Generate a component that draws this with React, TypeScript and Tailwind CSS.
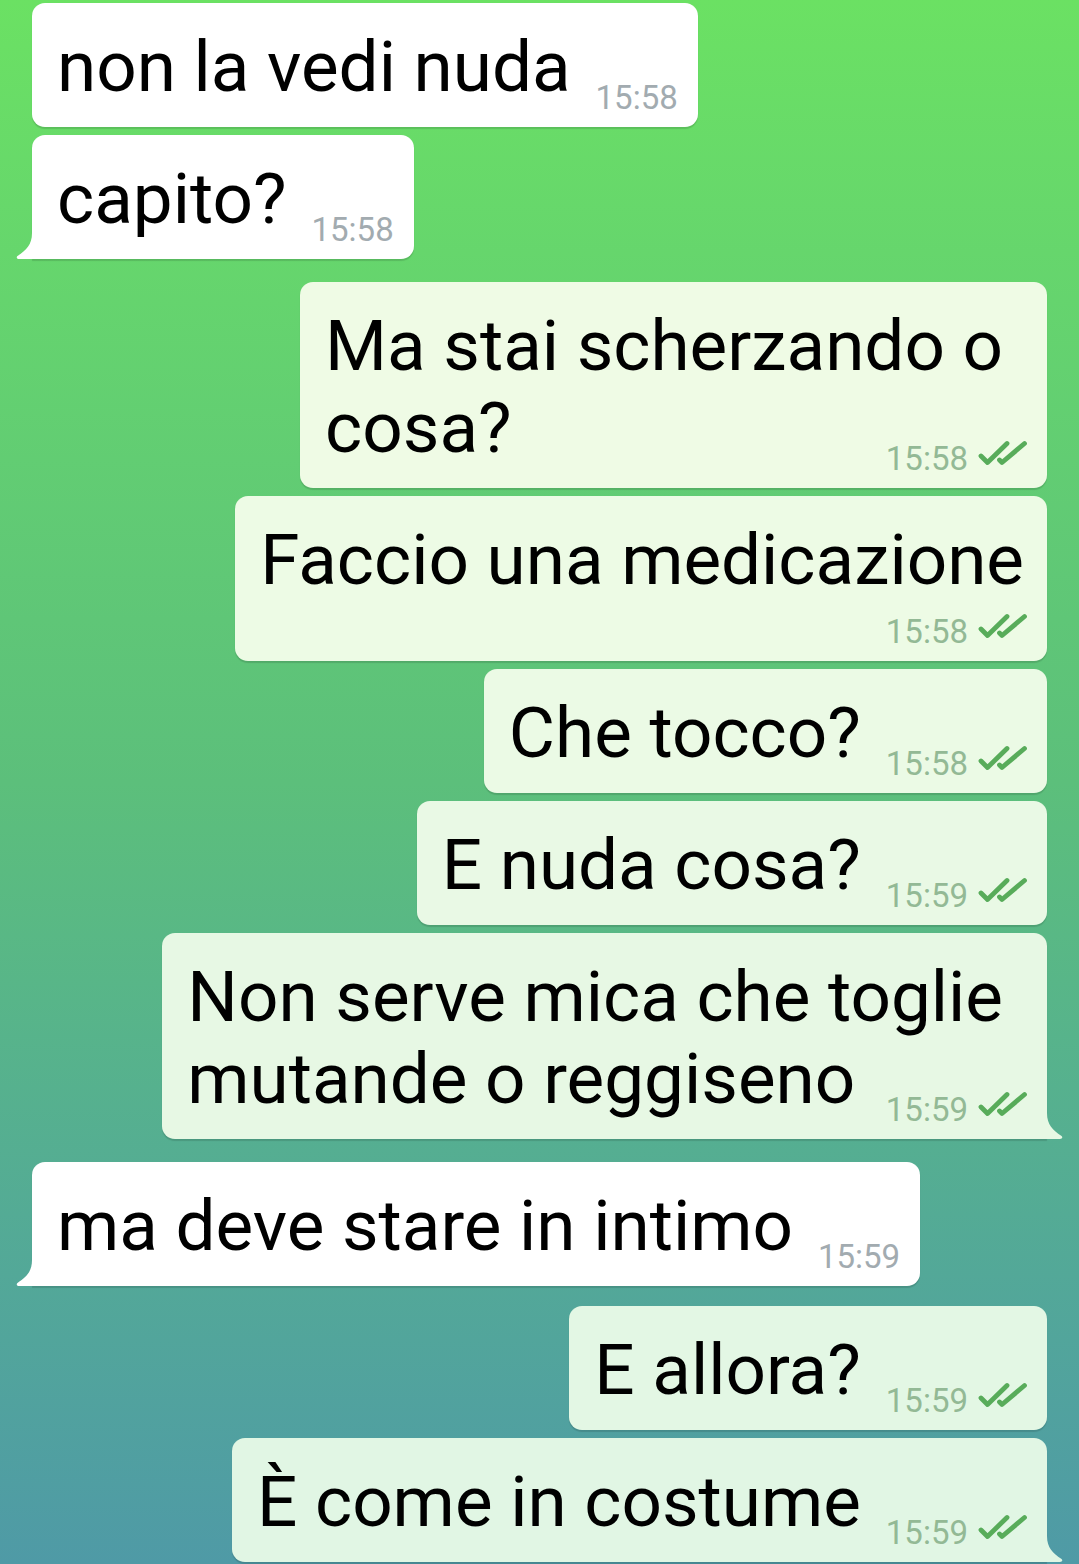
import React from "react";

type Msg = {
  side: "in" | "out";
  lines: string[];
  time: string;
  mode: "inline" | "below" | "wrap";
  tail?: boolean;
  bg?: string;
  mt: string;
};

const msgs: Msg[] = [
  { side: "in", lines: ["non la vedi nuda"], time: "15:58", mode: "inline", mt: "mt-[3px]" },
  { side: "in", lines: ["capito?"], time: "15:58", mode: "inline", tail: true, mt: "mt-[8px]" },
  { side: "out", lines: ["Ma stai scherzando o", "cosa?"], time: "15:58", mode: "wrap", bg: "bg-[#effbe5]", mt: "mt-[23px]" },
  { side: "out", lines: ["Faccio una medicazione"], time: "15:58", mode: "below", bg: "bg-[#edfbe5]", mt: "mt-[8px]" },
  { side: "out", lines: ["Che tocco?"], time: "15:58", mode: "inline", bg: "bg-[#ebfae5]", mt: "mt-[8px]" },
  { side: "out", lines: ["E nuda cosa?"], time: "15:59", mode: "inline", bg: "bg-[#e9f9e5]", mt: "mt-[8px]" },
  { side: "out", lines: ["Non serve mica che toglie", "mutande o reggiseno"], time: "15:59", mode: "wrap", tail: true, bg: "bg-[#e7f8e4]", mt: "mt-[8px]" },
  { side: "in", lines: ["ma deve stare in intimo"], time: "15:59", mode: "inline", tail: true, mt: "mt-[23px]" },
  { side: "out", lines: ["E allora?"], time: "15:59", mode: "inline", bg: "bg-[#e3f7e4]", mt: "mt-[20px]" },
  { side: "out", lines: ["È come in costume"], time: "15:59", mode: "inline", tail: true, bg: "bg-[#e1f6e4]", mt: "mt-[8px]" },
];

function Checks() {
  return (
    <svg width="50" height="26" viewBox="0 0 50 26" className="ml-[10px] mb-[9px] shrink-0" fill="none">
      <path d="M3 16 L9.5 22.5 L29 3.5" stroke="#58ac5a" strokeWidth="4.8" strokeLinecap="round" strokeLinejoin="round" />
      <path d="M21.5 20 L24 22.5 L46.5 3.5" stroke="#58ac5a" strokeWidth="4.8" strokeLinecap="round" strokeLinejoin="round" />
    </svg>
  );
}

function Meta({ m }: { m: Msg }) {
  const out = m.side === "out";
  return (
    <div className={`flex items-end shrink-0 ${m.mode === "below" ? "" : "ml-[25px]"}`}>
      <span className={`text-[33px] leading-[32px] ${out ? "text-[#93b995]" : "text-[#a2abb0]"}`}>
        {m.time}
      </span>
      {out && <Checks />}
    </div>
  );
}

function Tail({ side, color }: { side: "in" | "out"; color: string }) {
  if (side === "in") {
    return (
      <svg width="18" height="26" viewBox="0 0 18 26" className="absolute bottom-0 left-[-16px]">
        <path d="M18 0 L18 26 L3 26 C0.5 26 0 24 1.8 22.8 C10 17 16 12 16 0 Z" fill={color} />
      </svg>
    );
  }
  return (
    <svg width="18" height="26" viewBox="0 0 18 26" className="absolute bottom-0 right-[-16px]">
      <path d="M0 0 L0 26 L15 26 C17.5 26 18 24 16.2 22.8 C8 17 2 12 2 0 Z" fill={color} />
    </svg>
  );
}

const tailColor: Record<string, string> = {
  "bg-[#e7f8e4]": "#e7f8e4",
  "bg-[#e1f6e4]": "#e1f6e4",
};

const txt = "text-[71px] leading-[82px] whitespace-nowrap";

function Bubble({ m }: { m: Msg }) {
  const out = m.side === "out";
  const bg = out ? m.bg! : "bg-white";
  const radius = m.tail
    ? out
      ? "rounded-[13px] rounded-br-none"
      : "rounded-[13px] rounded-bl-none"
    : "rounded-[13px]";
  const color = out ? tailColor[m.bg!] ?? "#e5f7e4" : "#ffffff";
  return (
    <div className={`flex w-full ${out ? "justify-end pr-[32px]" : "justify-start pl-[32px]"} ${m.mt}`}>
      <div
        className={`relative ${bg} ${radius} shadow-[0_1.5px_1px_rgba(0,0,0,0.13)] pl-[25px] ${out ? "pr-[19px]" : "pr-[20px]"} pt-[23px] pb-[13px] text-black`}
      >
        {m.mode === "inline" && (
          <div className="flex items-end">
            <span className={`${txt} mb-[6px]`}>{m.lines[0]}</span>
            <Meta m={m} />
          </div>
        )}
        {m.mode === "below" && (
          <div className="flex flex-col">
            <span className={`${txt} pr-[4px]`}>{m.lines[0]}</span>
            <div className="flex justify-end mt-[12px]">
              <Meta m={m} />
            </div>
          </div>
        )}
        {m.mode === "wrap" && (
          <div className="flex flex-col">
            <span className={`${txt} pr-[25px]`}>{m.lines[0]}</span>
            <div className="flex items-end justify-between">
              <span className={`${txt} mb-[6px]`}>{m.lines[1]}</span>
              <Meta m={m} />
            </div>
          </div>
        )}
        {m.tail && <Tail side={m.side} color={color} />}
      </div>
    </div>
  );
}

export default function App() {
  return (
    <div
      className="w-[1079px] h-[1564px] overflow-hidden bg-gradient-to-b from-[#6be163] via-[#5cbf7b] to-[#4f9aa6] flex flex-col"
      style={{ fontFamily: "Roboto, 'Noto Sans', sans-serif" }}
    >
      {msgs.map((m, i) => (
        <Bubble key={i} m={m} />
      ))}
    </div>
  );
}
